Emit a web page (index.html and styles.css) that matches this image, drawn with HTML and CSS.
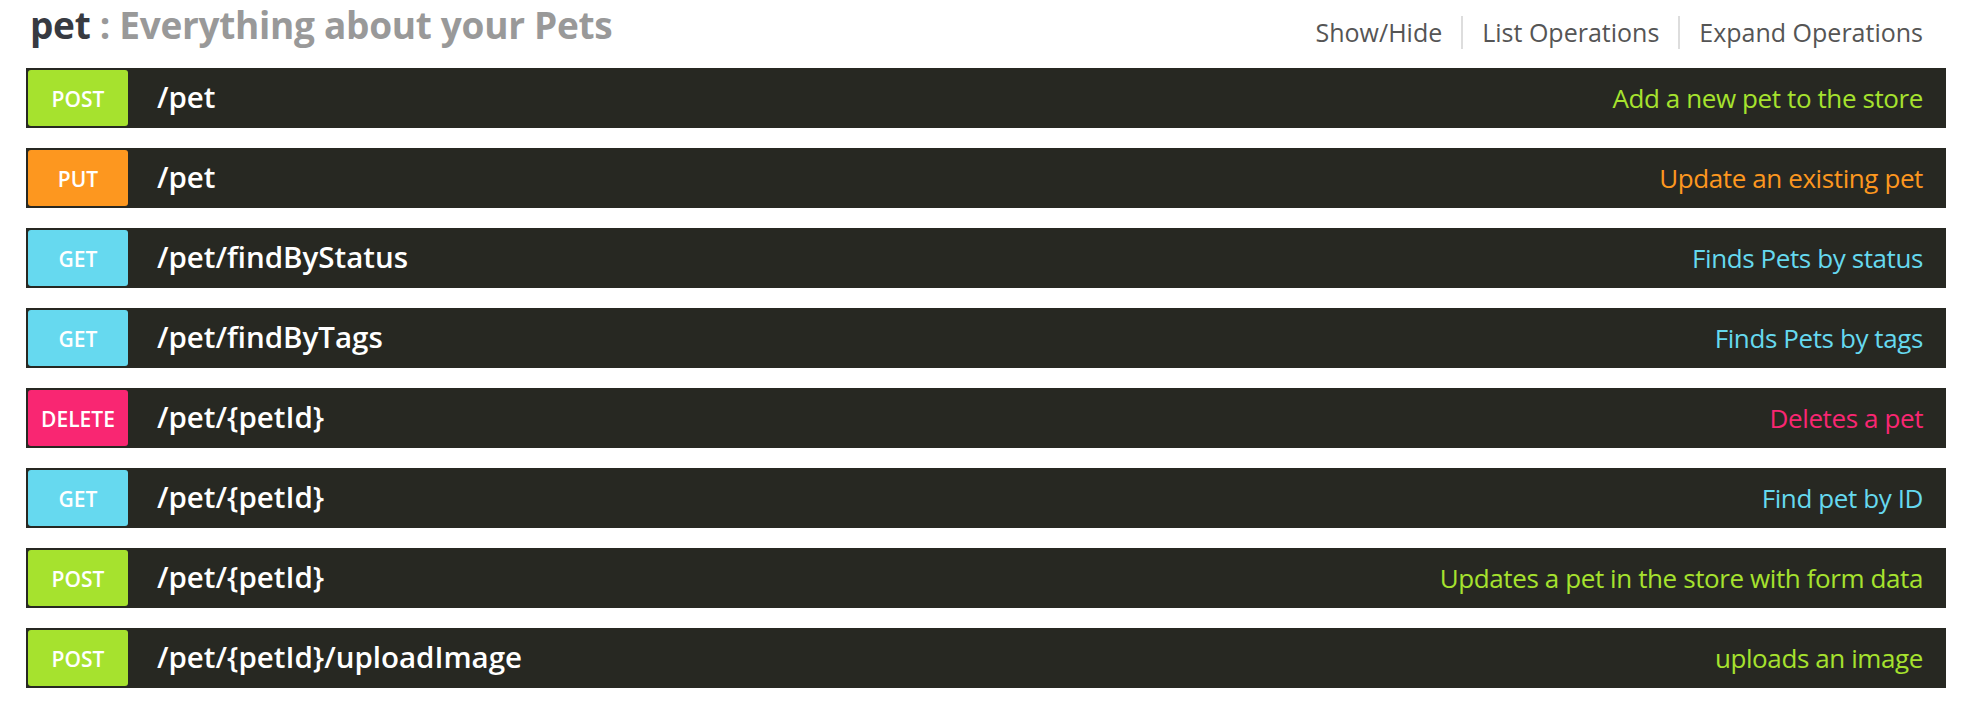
FILE: index.html
```html
<!DOCTYPE html>
<html>
<head>
<meta charset="utf-8">
<link rel="stylesheet" href="styles.css">
</head>
<body>
<div class="resource">
  <div class="heading">
    <h2 class="title"><span class="name">pet</span> : Everything about your Pets</h2>
    <ul class="options">
      <li><a>Show/Hide</a></li>
      <li><a>List Operations</a></li>
      <li><a>Expand Operations</a></li>
    </ul>
  </div>
  <ul class="ops">
    <li class="op post"><span class="method">POST</span><span class="path">/pet</span><span class="summary">Add a new pet to the store</span></li>
    <li class="op put"><span class="method">PUT</span><span class="path">/pet</span><span class="summary">Update an existing pet</span></li>
    <li class="op get"><span class="method">GET</span><span class="path">/pet/findByStatus</span><span class="summary">Finds Pets by status</span></li>
    <li class="op get"><span class="method">GET</span><span class="path">/pet/findByTags</span><span class="summary">Finds Pets by tags</span></li>
    <li class="op delete"><span class="method">DELETE</span><span class="path">/pet/{petId}</span><span class="summary">Deletes a pet</span></li>
    <li class="op get"><span class="method">GET</span><span class="path">/pet/{petId}</span><span class="summary">Find pet by ID</span></li>
    <li class="op post"><span class="method">POST</span><span class="path">/pet/{petId}</span><span class="summary">Updates a pet in the store with form data</span></li>
    <li class="op post"><span class="method">POST</span><span class="path">/pet/{petId}/uploadImage</span><span class="summary">uploads an image</span></li>
  </ul>
</div>
</body>
</html>
```
FILE: styles.css
```css
html, body {
  margin: 0;
  padding: 0;
  background: #ffffff;
  font-family: "Open Sans", "DejaVu Sans", sans-serif;
}

.resource {
  padding: 0 22px 0 26px;
}

.heading {
  display: flex;
  align-items: center;
  justify-content: space-between;
  height: 68px;
}

.title {
  margin: 0 0 0 4px;
  font-size: 37px;
  font-weight: 700;
  font-stretch: 90%;
  color: #999999;
  line-height: 1;
  align-self: flex-start;
  padding-top: 6px;
  letter-spacing: -0.3px;
}

.title .name {
  color: #373a41;
}

.options {
  list-style: none;
  margin: 0 23px 0 0;
  padding: 0;
  display: flex;
  align-items: center;
  align-self: flex-start;
  padding-top: 16px;
}

.options li {
  border-left: 2px solid #dddddd;
  padding: 0 0 0 19px;
  margin-left: 19px;
  height: 33px;
  display: flex;
  align-items: center;
}

.options li:first-child {
  border-left: none;
  padding-left: 0;
  margin-left: 0;
}

.options a {
  font-size: 25px;
  color: #555555;
  line-height: 1;
}

.ops {
  list-style: none;
  margin: 0;
  padding: 0;
  display: flex;
  flex-direction: column;
  gap: 20px;
}

.op {
  display: flex;
  align-items: center;
  height: 60px;
  background: #272822;
  padding: 2px;
  box-sizing: border-box;
}

.method {
  width: 100px;
  height: 56px;
  border-radius: 3px;
  display: flex;
  align-items: center;
  justify-content: center;
  color: #ffffff;
  font-size: 21px;
  font-weight: 600;
  font-stretch: 92%;
  flex: none;
  padding-top: 2px;
  box-sizing: border-box;
}

.path {
  margin-left: 29px;
  color: #ffffff;
  font-size: 29.5px;
  font-weight: 600;
  font-stretch: 96%;
  flex: 1;
  padding-bottom: 4px;
}

.summary {
  margin-right: 21px;
  font-size: 26px;
  font-weight: 500;
  font-stretch: 94%;
  letter-spacing: -0.4px;
}

.post .method { background: #a6e22e; }
.post .summary { color: #a6e22e; }
.put .method { background: #fd971f; }
.put .summary { color: #fd971f; }
.get .method { background: #66d9ef; }
.get .summary { color: #66d9ef; }
.delete .method { background: #f92672; }
.delete .summary { color: #f92672; }
```
